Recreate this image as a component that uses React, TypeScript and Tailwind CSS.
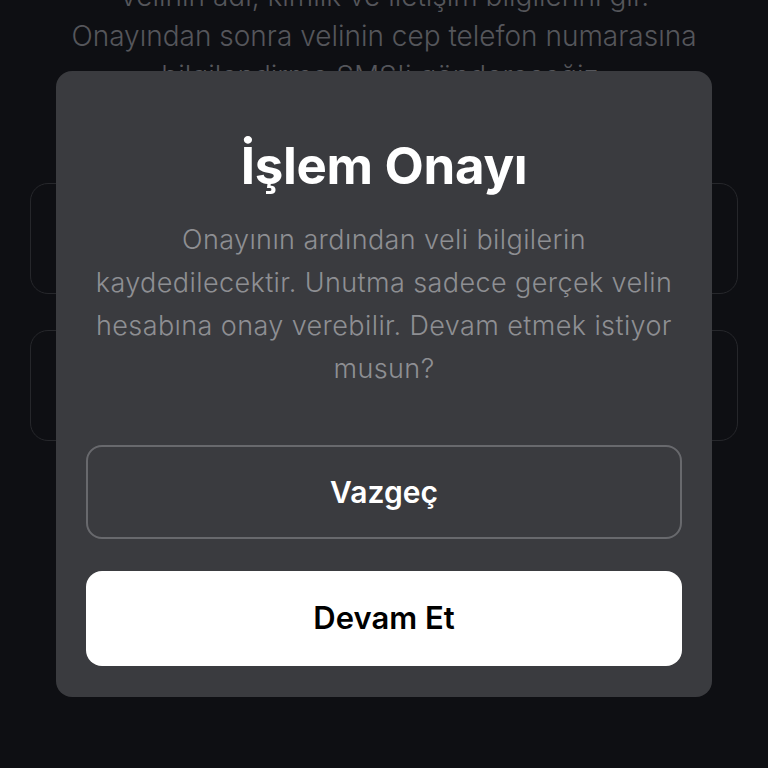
export default function App() {
  return (
    <div
      className="relative h-[768px] w-[768px] overflow-hidden bg-[#0e0f13]"
      style={{ fontFamily: 'Inter, "Noto Sans", sans-serif' }}
    >
      {/* page behind the dialog */}
      <div className="px-[30px]">
        <p className="mt-[-24px] px-[40px] text-center text-[28px] leading-[40px] font-light text-[#55565b]">
          Velinin adı, kimlik ve iletişim bilgilerini gir. Onayından sonra velinin cep telefon numarasına
          bilgilendirme SMS&apos;i göndereceğiz.
        </p>
        <div className="mt-[87px] h-[111px] rounded-[18px] border border-[#26272b]" />
        <div className="mt-[36px] h-[111px] rounded-[18px] border border-[#26272b]" />
      </div>

      {/* confirm dialog */}
      <div className="absolute inset-0 flex items-center justify-center px-[56px]">
        <div className="flex w-full flex-col rounded-[16px] bg-[#3a3b3f] px-[30px] pt-[65px] pb-[31px]">
          <h2 className="text-center text-[51px] leading-[60px] font-bold tracking-[-0.3px] text-white">
            İşlem Onayı
          </h2>
          <p className="mt-[22px] text-center text-[27px] leading-[43px] font-light tracking-[0.4px] text-[#8e8f93]">
            Onayının ardından veli bilgilerin
            <br />
            kaydedilecektir. Unutma sadece gerçek velin
            <br />
            hesabına onay verebilir. Devam etmek istiyor
            <br />
            musun?
          </p>
          <button
            type="button"
            className="mt-[55px] h-[94px] rounded-[16px] border-2 border-[#68696d] text-[30px] font-semibold text-white"
          >
            Vazgeç
          </button>
          <button
            type="button"
            className="mt-[32px] h-[95px] rounded-[16px] bg-white text-[31px] font-semibold text-black"
          >
            Devam Et
          </button>
        </div>
      </div>
    </div>
  );
}
